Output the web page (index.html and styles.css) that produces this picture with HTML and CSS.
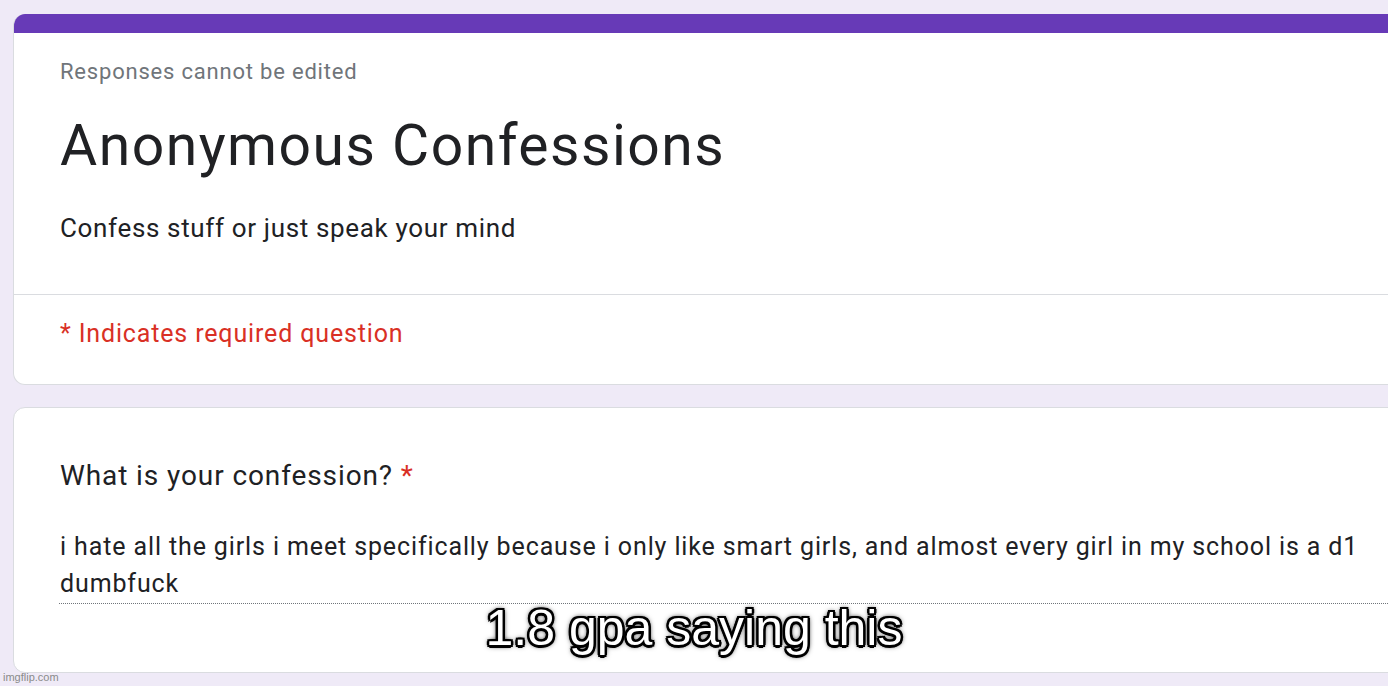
FILE: index.html
```html
<!DOCTYPE html>
<html>
<head>
<meta charset="utf-8">
<link rel="stylesheet" href="styles.css">
</head>
<body>
<div class="page">
  <div class="card header-card">
    <div class="accent"></div>
    <div class="head-main">
      <div class="note">Responses cannot be edited</div>
      <h1 class="title">Anonymous Confessions</h1>
      <div class="desc">Confess stuff or just speak your mind</div>
    </div>
    <div class="head-req">* Indicates required question</div>
  </div>
  <div class="card question-card">
    <div class="q-title">What is your confession? <span class="star">*</span></div>
    <div class="answer">i hate all the girls i meet specifically because i only like smart girls, and almost every girl in my school is a d1 dumbfuck</div>
  </div>
</div>
<div class="caption">1.8 gpa saying this</div>
<div class="watermark">imgflip.com</div>
</body>
</html>
```
FILE: styles.css
```css
html, body {
  margin: 0;
  padding: 0;
  width: 1388px;
  height: 686px;
  overflow: hidden;
  background: #efeaf7;
  font-family: Roboto, "Noto Sans", sans-serif;
  position: relative;
}
.page {
  padding: 14px 0 0 13px;
  display: flex;
  flex-direction: column;
  gap: 22px;
}
.card {
  width: 1420px;
  background: #fff;
  border: 1px solid #dadce0;
  border-radius: 12px;
  box-sizing: border-box;
}
.header-card {
  height: 371px;
  border-top: none;
  overflow: hidden;
}
.accent {
  height: 19px;
  background: #673ab7;
}
.head-main {
  padding: 24px 0 0 46px;
  height: 262px;
  box-sizing: border-box;
  border-bottom: 1px solid #dadce0;
}
.note {
  font-size: 22px;
  letter-spacing: 0.8px;
  color: #70757a;
  line-height: 30px;
}
.title {
  margin: 24px 0 0;
  font-weight: 400;
  font-size: 57px;
  letter-spacing: 1.5px;
  line-height: 70px;
  color: #202124;
}
.desc {
  margin-top: 29px;
  font-size: 26px;
  letter-spacing: 0.65px;
  line-height: 36px;
  color: #202124;
}
.head-req {
  padding: 21px 0 0 46px;
  font-size: 25px;
  letter-spacing: 0.85px;
  line-height: 36px;
  color: #d93025;
}
.question-card {
  height: 266px;
  padding: 48px 0 0 46px;
}
.q-title {
  font-size: 28px;
  letter-spacing: 0.9px;
  line-height: 40px;
  color: #202124;
}
.star {
  color: #d93025;
}
.answer {
  margin-top: 32px;
  margin-left: -1px;
  font-size: 25px;
  letter-spacing: 0.88px;
  line-height: 37px;
  color: #202124;
  padding: 0 40px 1px 1px;
  border-bottom: 1px dotted #70757a;
}
.caption {
  position: absolute;
  left: 0;
  width: 1388px;
  top: 598px;
  text-align: center;
  font-family: "Liberation Sans", Arial, sans-serif;
  font-size: 50px;
  line-height: 60px;
  color: #fff;
  text-shadow:
    -2px -2px 0 #000, 2px -2px 0 #000, -2px 2px 0 #000, 2px 2px 0 #000,
    0 -2.5px 0 #000, 0 2.5px 0 #000, -2.5px 0 0 #000, 2.5px 0 0 #000,
    0 0 6px #000, 0 0 4px #000;
}
.watermark {
  position: absolute;
  left: 3px;
  top: 670px;
  font-family: "Liberation Sans", Arial, sans-serif;
  font-size: 11px;
  line-height: 14px;
  color: #8a8a8a;
}
```
